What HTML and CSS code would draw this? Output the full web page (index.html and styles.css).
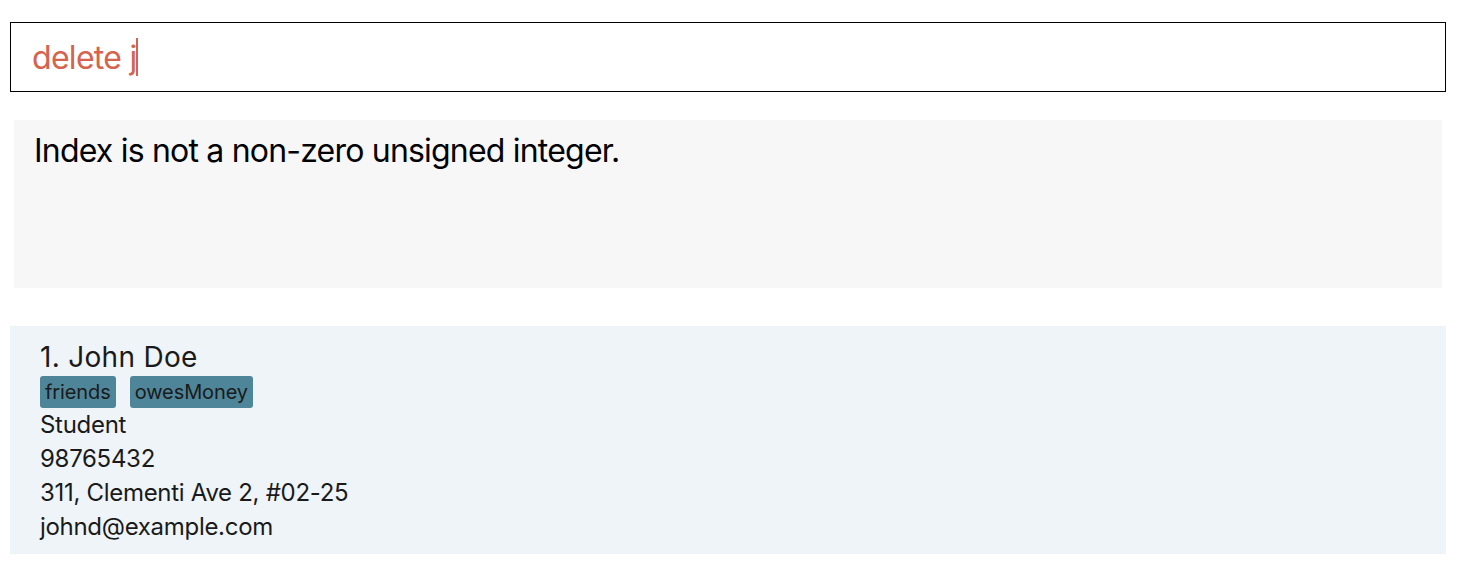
FILE: index.html
```html
<!DOCTYPE html>
<html>
<head>
<meta charset="utf-8">
<link rel="stylesheet" href="styles.css">
</head>
<body>
<div class="app">
  <div class="command-box">
    <span class="command-text">delete j</span><span class="caret"></span>
  </div>
  <div class="result-box">
    <p class="result-text">Index is not a non-zero unsigned integer.</p>
  </div>
  <div class="person-card">
    <div class="name">1. John Doe</div>
    <div class="tags">
      <span class="tag">friends</span>
      <span class="tag">owesMoney</span>
    </div>
    <div class="field">Student</div>
    <div class="field">98765432</div>
    <div class="field">311, Clementi Ave 2, #02-25</div>
    <div class="field">johnd@example.com</div>
  </div>
</div>
</body>
</html>
```
FILE: styles.css
```css
html, body {
  margin: 0;
  padding: 0;
  background: #ffffff;
}
body {
  font-family: Inter, "Noto Sans", sans-serif;
}
.app {
  padding: 22px 16px 0 10px;
  display: flex;
  flex-direction: column;
}
.command-box {
  box-sizing: border-box;
  height: 70px;
  border: 1px solid #000;
  display: flex;
  align-items: center;
  padding-left: 21px;
}
.command-text {
  font-size: 32px;
  color: #d5634e;
  letter-spacing: -0.7px;
}
.caret {
  width: 2px;
  height: 38px;
  background: #d5634e;
  margin-left: -1px;
}
.result-box {
  margin: 28px 4px 0 4px;
  height: 168px;
  background: #f7f7f7;
  padding: 12px 20px;
  box-sizing: border-box;
}
.result-text {
  margin: 0;
  font-size: 32px;
  color: #000;
  letter-spacing: -0.8px;
  line-height: 38px;
}
.person-card {
  margin-top: 38px;
  height: 228px;
  box-sizing: border-box;
  background: #eff4f8;
  padding: 14px 30px;
  color: #1a1a1a;
}
.name {
  font-size: 28px;
  line-height: 34px;
  letter-spacing: 0.3px;
}
.tags {
  display: flex;
  gap: 14px;
  margin: 2px 0 0 0;
}
.tag {
  background: #4f8599;
  color: #1a1a1a;
  border-radius: 3px;
  font-size: 20px;
  line-height: 32px;
  padding: 0 5px;
  letter-spacing: -0.1px;
}
.field {
  font-size: 24px;
  line-height: 34px;
  letter-spacing: -0.3px;
}
```
